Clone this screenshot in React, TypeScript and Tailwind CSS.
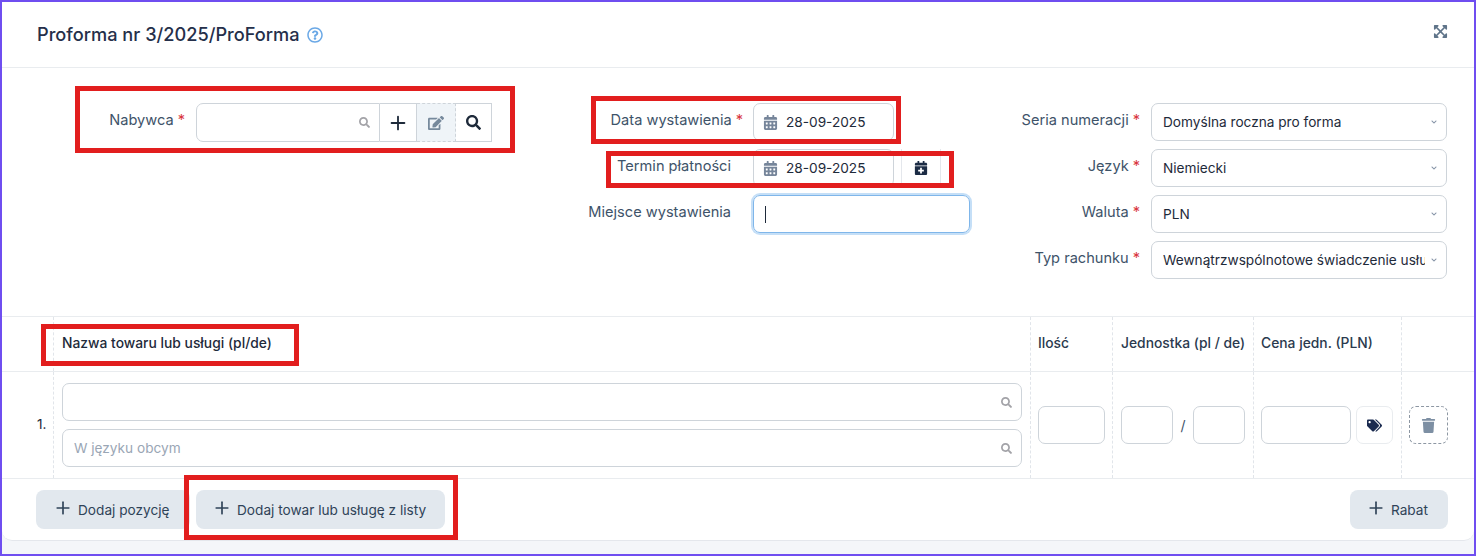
import type { ReactNode } from "react";
import { Plus } from "lucide-react";
import {
  FaCalendarAlt,
  FaCalendarPlus,
  FaChevronDown,
  FaEdit,
  FaExpandArrowsAlt,
  FaRegQuestionCircle,
  FaSearch,
  FaTags,
  FaTrash,
} from "react-icons/fa";

const inputBox = "h-[38px] rounded-[7px] border border-[#ced4da] bg-white";

function Label({ children, required, width }: { children: ReactNode; required?: boolean; width: string }) {
  return (
    <div className={`${width} h-[38px] shrink-0 whitespace-nowrap pt-[8px] text-right text-[14.6px] leading-[18px] text-[#3e5369]`}>
      {children}
      {required ? <span className="ml-1 text-[#d9363e]">*</span> : <span className="inline-block w-[12px]" />}
    </div>
  );
}

function DateInput() {
  return (
    <div className={`${inputBox} flex w-[141px] shrink-0 items-center whitespace-nowrap pl-[9px] text-[13.65px] text-[#1e2a3a]`}>
      <FaCalendarAlt className="mr-[8px] text-[15px] text-[#76859a]" />
      <span className="pt-px">28-09-2025</span>
    </div>
  );
}

function SelectRow({ label, value }: { label: string; value: string }) {
  return (
    <div className="flex gap-[11px]">
      <Label required width="w-[130px]">{label}</Label>
      <div className={`${inputBox} flex w-[296px] items-center pl-[11px] pr-[9px] text-[13.65px] text-[#1e2a3a]`}>
        <span className="w-[262px] overflow-hidden whitespace-nowrap pt-px">{value}</span>
        <FaChevronDown className="ml-auto text-[6px] text-[#8492a6]" />
      </div>
    </div>
  );
}

function SearchInput({ placeholder }: { placeholder?: string }) {
  return (
    <div className={`${inputBox} flex items-center px-[11px] text-[13.65px] text-[#9aa6b5]`}>
      {placeholder}
      <FaSearch className="ml-auto -mr-[2px] text-[11px] text-[#a3a3a8]" />
    </div>
  );
}

function ActionButton({ label, className }: { label: string; className: string }) {
  return (
    <button className={`flex h-[39px] shrink-0 items-center rounded-[8px] bg-[#e2e8ee] text-[13.65px] text-[#2f4358] ${className}`}>
      <Plus size={20} strokeWidth={2} className="-mt-[3px] mr-[5px]" />
      <span className="pt-px">{label}</span>
    </button>
  );
}

function Cell({ width, children }: { width: string; children?: ReactNode }) {
  return <div className={`${width} shrink-0 border-r border-dashed border-[#e1e5ea]`}>{children}</div>;
}

function Marker({ className }: { className: string }) {
  return <div className={`absolute border-[5px] border-[#e21e1e] ${className}`} />;
}

export default function App() {
  return (
    <div className="relative h-[556px] w-[1476px] overflow-hidden border-2 border-[#6f4ef0] bg-[#f4f6f9] font-['Inter',sans-serif]">
      <div className="h-[539px] rounded-b-[10px] border-b border-[#e4e7ec] bg-white">
        {/* header */}
        <div className="flex h-[66px] items-center border-b border-[#e9ecef] pl-[35px] pr-[26px]">
          <h1 className="text-[18.2px] font-medium text-[#252f4a]">Proforma nr 3/2025/ProForma</h1>
          <FaRegQuestionCircle className="ml-[7px] text-[16px] text-[#6aa8e6]" />
          <FaExpandArrowsAlt className="ml-auto -mt-[7px] text-[15px] text-[#5f7489]" />
        </div>

        {/* form */}
        <div className="flex h-[248px] pl-[20px] pt-[35px]">
          <div className="flex w-[470px] gap-[11px]">
            <Label required width="w-[163px]">Nabywca</Label>
            <div className="flex h-[39px]">
              <div className="flex w-[184px] items-center rounded-l-[7px] border border-[#ced4da] pr-[9px]">
                <FaSearch className="ml-auto text-[11px] text-[#a3a3a8]" />
              </div>
              <div className="flex w-[37px] items-center justify-center border-y border-r border-[#ced4da]">
                <Plus size={22} strokeWidth={2} className="text-[#1e2a3a]" />
              </div>
              <div className="flex w-[39px] items-center justify-center border-y border-r border-dashed border-[#ced4da] bg-[#eff4f8]">
                <FaEdit className="text-[16px] text-[#76899c]" />
              </div>
              <div className="flex w-[36px] items-center justify-center border-y border-r border-[#ced4da]">
                <FaSearch className="text-[15px] text-[#1e2a3a]" />
              </div>
            </div>
          </div>

          <div className="flex w-[518px] flex-col gap-2">
            <div className="flex gap-[10px]">
              <Label required width="w-[251px]">Data wystawienia</Label>
              <DateInput />
            </div>
            <div className="flex gap-[10px]">
              <Label width="w-[251px]">Termin płatności</Label>
              <DateInput />
              <div className="-ml-[3px] flex h-[38px] w-[40px] items-center justify-center border-x border-[#e4e7ec]">
                <FaCalendarPlus className="text-[14px] text-[#1b2b44]" />
              </div>
            </div>
            <div className="flex gap-[10px]">
              <Label width="w-[251px]">Miejsce wystawienia</Label>
              <div className="flex h-[38px] w-[217px] items-center rounded-[7px] border border-[#7fb6ea] pl-[11px] shadow-[0_0_0_2px_#c5dff7]">
                <div className="h-[17px] w-px bg-[#1e2a3a]" />
              </div>
            </div>
          </div>

          <div className="flex flex-col gap-2">
            <SelectRow label="Seria numeracji" value="Domyślna roczna pro forma" />
            <SelectRow label="Język" value="Niemiecki" />
            <SelectRow label="Waluta" value="PLN" />
            <SelectRow label="Typ rachunku" value="Wewnątrzwspólnotowe świadczenie usług" />
          </div>
        </div>

        {/* table head */}
        <div className="flex h-[56px] items-stretch border-y border-[#e9ecef] text-[13.85px] font-medium leading-[53px] text-[#2b3a4e]">
          <Cell width="w-[52px]" />
          <Cell width="w-[977px]"><span className="pl-2 text-[#1e2a3a]">Nazwa towaru lub usługi (pl/de)</span></Cell>
          <Cell width="w-[82px]"><span className="pl-[7px]">Ilość</span></Cell>
          <Cell width="w-[141px]"><span className="pl-2 whitespace-nowrap">Jednostka (pl / de)</span></Cell>
          <Cell width="w-[148px]"><span className="pl-[7px]">Cena jedn. (PLN)</span></Cell>
        </div>

        {/* table row */}
        <div className="flex h-[107px] border-b border-[#e9ecef]">
          <Cell width="w-[52px]">
            <div className="pl-[35px] pt-[43px] text-[13.65px] leading-[18px] text-[#1e2a3a]">1.</div>
          </Cell>
          <Cell width="w-[977px]">
            <div className="flex flex-col gap-2 pl-2 pr-2 pt-[11px]">
              <SearchInput />
              <SearchInput placeholder="W języku obcym" />
            </div>
          </Cell>
          <Cell width="w-[82px]">
            <div className="pl-[7px] pt-[34px]">
              <div className={`${inputBox} w-[67px]`} />
            </div>
          </Cell>
          <Cell width="w-[141px]">
            <div className="flex items-center pl-2 pt-[34px]">
              <div className={`${inputBox} w-[52px]`} />
              <span className="w-[20px] text-center text-[14px] text-[#3e5369]">/</span>
              <div className={`${inputBox} w-[52px]`} />
            </div>
          </Cell>
          <Cell width="w-[148px]">
            <div className="flex gap-[5px] pl-[7px] pt-[34px]">
              <div className={`${inputBox} w-[90px]`} />
              <div className="flex h-[38px] w-[37px] items-center justify-center rounded-[7px] border border-[#e9ecef]">
                <FaTags className="text-[15px] text-[#1b2b50]" />
              </div>
            </div>
          </Cell>
          <div className="pl-[7px] pt-[34px]">
            <div className="flex h-[38px] w-[39px] items-center justify-center rounded-[7px] border border-dashed border-[#8d97a3]">
              <FaTrash className="text-[15px] text-[#7d8fa3]" />
            </div>
          </div>
        </div>

        {/* footer */}
        <div className="flex pl-[34px] pr-[26px] pt-[11px]">
          <ActionButton label="Dodaj pozycję" className="w-[154px] pl-[17px]" />
          <ActionButton label="Dodaj towar lub usługę z listy" className="ml-[6px] w-[249px] pl-[16px]" />
          <ActionButton label="Rabat" className="ml-auto w-[98px] pl-[16px]" />
        </div>
      </div>

      {/* red annotation frames drawn over the screenshot */}
      <Marker className="left-[73px] top-[84px] h-[67px] w-[440px]" />
      <Marker className="left-[589px] top-[94px] h-[48px] w-[310px]" />
      <Marker className="left-[604px] top-[149px] h-[37px] w-[348px]" />
      <Marker className="left-[39px] top-[322px] h-[42px] w-[258px]" />
      <Marker className="left-[182px] top-[473px] h-[65px] w-[274px]" />
    </div>
  );
}
